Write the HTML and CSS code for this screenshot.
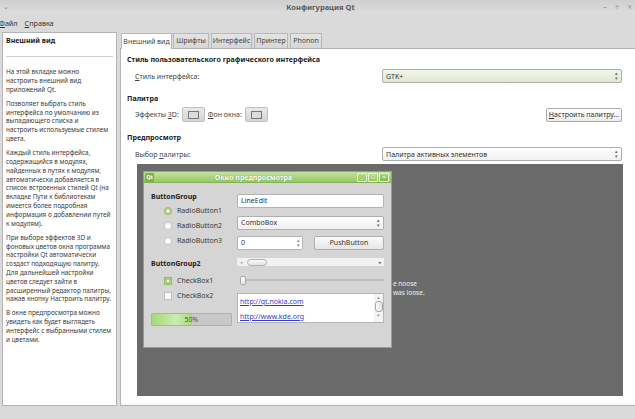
FILE: index.html
```html
<!DOCTYPE html>
<html lang="ru">
<head>
<meta charset="utf-8">
<title>Конфигурация Qt</title>
<link rel="stylesheet" href="styles.css">
</head>
<body>
<div class="titlebar">
  <span class="tb-menu">&#8964;</span>
  <span class="tb-title">Конфигурация Qt</span>
  <span class="tb-ctrls"><span>&#8211;</span><span>+</span><span>&#215;</span></span>
</div>
<div class="menubar">
  <span class="menu"><u>Ф</u>айл</span>
  <span class="menu"><u>С</u>правка</span>
</div>
<div class="main">
  <div class="help">
    <div class="help-title">Внешний вид</div>
    <div class="sep"></div>
    <p>На этой вкладке можно<br>настроить внешний вид<br>приложений Qt.</p>
    <p>Позволяет выбрать стиль<br>интерфейса по умолчанию из<br>выпадающего списка и<br>настроить используемые стилем<br>цвета.</p>
    <p>Каждый стиль интерфейса,<br>содержащийся в модулях,<br>найденных в путях к модулям,<br>автоматически добавляется в<br>список встроенных стилей Qt (на<br>вкладке Пути к библиотекам<br>имеется более подробная<br>информация о добавлении путей<br>к модулям).</p>
    <p>При выборе эффектов 3D и<br>фоновых цветов окна программа<br>настройки Qt автоматически<br>создаст подходящую палитру.<br>Для дальнейшей настройки<br>цветов следует зайти в<br>расширенный редактор палитры,<br>нажав кнопку Настроить палитру.</p>
    <p>В окне предпросмотра можно<br>увидеть как будет выглядеть<br>интерфейс с выбранными стилем<br>и цветами.</p>
  </div>
  <div class="tabwidget">
    <div class="tabbar">
      <span class="tab active w1">Внешний вид</span>
      <span class="tab w2">Шрифты</span>
      <span class="tab w3">Интерфейс</span>
      <span class="tab w4">Принтер</span>
      <span class="tab w5">Phonon</span>
    </div>
    <div class="panel">
      <div class="h">Стиль пользовательского графического интерфейса</div>
      <div class="row r1">
        <span class="lbl"><u>С</u>тиль интерфейса:</span>
        <span class="combo green">GTK+<span class="arr">&#9652;<br>&#9662;</span></span>
      </div>
      <div class="h h2">Палитра</div>
      <div class="row r2">
        <span>Эффекты <u>3</u>D:</span>
        <span class="colbtn"><span class="swatch"></span></span>
        <span><u>Ф</u>он окна:</span>
        <span class="colbtn"><span class="swatch"></span></span>
        <span class="spacer"></span>
        <span class="btn"><u>Н</u>астроить палитру...</span>
      </div>
      <div class="h h2">Предпросмотр</div>
      <div class="row r1">
        <span class="lbl">Выбор <u>п</u>алитры:</span>
        <span class="combo">Палитра активных элементов<span class="arr">&#9652;<br>&#9662;</span></span>
      </div>
      <div class="canvas">
        <div class="bgtext">e noose<br>was loose.</div>
        <div class="pwin">
          <div class="ptitle">
            <span class="qt">Qt</span>
            <span class="ptitle-text">Окно предпросмотра</span>
            <span class="pbtns"><span class="pb">_</span><span class="pb">&#9633;</span><span class="pb close">&#215;</span></span>
          </div>
          <div class="pbody">
            <div class="lcol">
              <div class="gh">ButtonGroup</div>
              <div class="opt"><span class="radio on"></span>RadioButton1</div>
              <div class="opt"><span class="radio"></span>RadioButton2</div>
              <div class="opt"><span class="radio"></span>RadioButton3</div>
              <div class="gh gh2">ButtonGroup2</div>
              <div class="opt o2"><span class="check on"></span>CheckBox1</div>
              <div class="opt"><span class="check"></span>CheckBox2</div>
              <div class="progress"><span class="fill" style="width:50%"></span><span class="ptext">50%</span></div>
            </div>
            <div class="rcol">
              <div class="ledit">LineEdit</div>
              <div class="pcombo">ComboBox<span class="arr">&#9652;<br>&#9662;</span></div>
              <div class="spinrow">
                <span class="spin">0<span class="sarr">&#9652;<br>&#9662;</span></span>
                <span class="pbutton">PushButton</span>
              </div>
              <div class="hscroll"><span class="sa">&#9666;</span><span class="handle"></span><span class="sa right">&#9656;</span></div>
              <div class="slider"><span class="shandle"></span></div>
              <div class="list">
                <div class="links"><a>http://qt.nokia.com</a><a>http://www.kde.org</a></div>
                <div class="vscroll"><span class="va">&#9652;</span><span class="vhandle"></span><span class="va">&#9662;</span></div>
              </div>
            </div>
          </div>
        </div>
      </div>
    </div>
  </div>
</div>
</body>
</html>
```
FILE: styles.css
```css
* { box-sizing: border-box; margin: 0; padding: 0; }
html, body { width: 635px; height: 419px; overflow: hidden; }
body {
  background: #dadada;
  font-family: "Noto Sans", "Open Sans", sans-serif;
  font-size: 7px;
  color: #333;
}
u { text-decoration: underline; }

.titlebar {
  height: 13px;
  display: flex;
  align-items: center;
  background: linear-gradient(#cfcfcf, #dcdcdc);
  color: #666;
}
.tb-menu { width: 40px; padding-left: 3px; font-size: 7px; color: #888; }
.tb-title { flex: 1; text-align: center; font-weight: bold; font-size: 7.5px; color: #5a5a5a; padding-left: 6px; }
.tb-ctrls { width: 40px; display: flex; justify-content: flex-end; gap: 8px; padding-right: 3px; color: #999; font-size: 8px; }

.menubar {
  height: 19px;
  display: flex;
  align-items: center;
  gap: 7px;
  margin-left: -1px;
  font-size: 7.2px;
  color: #333;
}

.main {
  display: flex;
  padding-left: 2px;
  height: 374px;
}
.help {
  width: 115px;
  height: 374px;
  background: #fff;
  border: 1px solid #b4b4b4;
  padding: 3px 3px 0 3px;
  line-height: 8.8px;
}
.help-title { font-weight: bold; color: #222; height: 10px; line-height: 10px; }
.sep { height: 1px; background: #d0d0d0; margin: 10px 0 11px 0; }
.help p { margin-bottom: 5.4px; color: #3a3a3a; white-space: nowrap; font-size: 6.4px; }

.tabwidget { flex: 1; margin-left: 3px; display: flex; flex-direction: column; }
.tabbar { height: 16px; display: flex; align-items: flex-end; padding-left: 1px; }
.tab {
  height: 15px;
  line-height: 14px;
  text-align: center;
  border: 1px solid #b8b8b8;
  border-bottom: none;
  background: linear-gradient(#e4e4e4, #d6d6d6);
  margin-right: 2px;
  color: #444;
}
.tab.active { height: 16px; background: #fff; position: relative; z-index: 2; margin-bottom: -1px; line-height: 15px; }
.w1 { width: 51px; margin-right: 1px; }
.w2 { width: 36px; }
.w3 { width: 41px; }
.w4 { width: 34px; }
.w5 { width: 32px; }

.panel {
  height: 358px;
  background: linear-gradient(#fff 0, #fff 353px, #ececec 358px);
  border: 1px solid #b4b4b4;
  border-right: none;
  padding: 5px 0 0 6px;
}
.h { height: 11px; line-height: 11px; font-weight: bold; color: #222; font-size: 7.1px; }
.h2 { margin-top: 10px; }
.row { display: flex; align-items: center; padding-left: 8px; color: #444; }
.r1 { height: 14px; margin-top: 3px; }
.h + .r1 { margin-top: 4px; }
.lbl { width: 247px; }
.combo {
  width: 240px;
  height: 14px;
  border: 1px solid #adadad;
  border-radius: 2px;
  background: linear-gradient(#ffffff, #f1f1f1);
  padding-left: 3px;
  display: flex;
  align-items: center;
  position: relative;
  color: #333;
}
.combo.green { background: linear-gradient(#f3f7ea, #dfe8cf); }
.arr {
  position: absolute;
  right: 3px;
  top: 1px;
  font-size: 5px;
  line-height: 5px;
  color: #666;
}
.r2 { height: 15px; margin-top: 3px; }
.colbtn {
  width: 23px;
  height: 15px;
  border: 1px solid #c0c0c0;
  border-radius: 2px;
  background: linear-gradient(#eaeaea, #d4d4d4);
  display: flex;
  align-items: center;
  justify-content: center;
  margin: 0 3px 0 3px;
}
.swatch { width: 11px; height: 8px; border: 1px solid #777; background: #dcdcdc; }
.spacer { flex: 1; }
.btn {
  width: 76px;
  height: 14px;
  border: 1px solid #adadad;
  border-radius: 2px;
  background: linear-gradient(#ffffff, #ececec);
  display: flex;
  align-items: center;
  justify-content: center;
  margin-right: 13px;
  color: #333;
}

.canvas {
  position: relative;
  margin: 3px 0 0 10px;
  width: 486px;
  height: 232px;
  background: #6b6b6b;
  overflow: hidden;
}
.bgtext {
  position: absolute;
  left: 256px;
  top: 116px;
  color: #f0f0f0;
  font-size: 6.5px;
  line-height: 8.5px;
}
.pwin {
  position: absolute;
  left: 6px;
  top: 7px;
  width: 249px;
  height: 177px;
  background: #d5d5d5;
  border: 1px solid #9a9a9a;
  border-top: none;
}
.ptitle {
  height: 12px;
  margin: 0 -1px;
  background: linear-gradient(#c3e39c, #98c865);
  border: 1px solid #84b356;
  border-radius: 2px 2px 0 0;
  display: flex;
  align-items: center;
  position: relative;
}
.qt {
  width: 9px;
  height: 9px;
  margin-left: 1px;
  background: #7cb342;
  color: #fff;
  font-weight: bold;
  font-size: 5.5px;
  line-height: 9px;
  text-align: center;
  border-radius: 1px;
}
.ptitle-text {
  flex: 1;
  text-align: center;
  color: #fff;
  font-size: 7px;
  font-weight: bold;
  text-shadow: 0 0 1px #5a8a2c;
  padding-right: 4px;
}
.pbtns { display: flex; gap: 1px; padding-right: 2px; }
.pb {
  width: 10px;
  height: 9px;
  border: 1px solid #e6f3d6;
  border-radius: 1px;
  background: linear-gradient(#b7dc8b, #94c562);
  color: #fff;
  font-size: 6px;
  line-height: 7px;
  text-align: center;
}
.pb.close { background: linear-gradient(#a9d67a, #86bc4f); }

.pbody { display: flex; gap: 5px; padding: 8px 0 0 7px; color: #333; font-size: 7px; }
.lcol { width: 81px; display: flex; flex-direction: column; }
.gh { height: 12px; line-height: 12px; font-weight: bold; color: #222; }
.gh2 { margin-top: 10px; }
.opt { height: 15px; display: flex; align-items: center; padding-left: 13px; gap: 5px; color: #3a3a3a; }
.o2 { margin-top: 3px; }
.radio {
  width: 8px;
  height: 8px;
  border-radius: 50%;
  background: #fff;
  border: 1px solid #c4c4c4;
}
.radio.on { background: radial-gradient(circle, #f4fbe9 0 1.5px, #a9d27c 2px); border-color: #8fbf60; }
.check {
  width: 8px;
  height: 8px;
  background: #fff;
  border: 1px solid #bdbdbd;
}
.check.on { background: radial-gradient(circle, #fff 0 1px, #a7d07a 1.5px); border-color: #8fbf60; }
.progress {
  margin-top: 10px;
  height: 13px;
  width: 81px;
  border: 1px solid #b0b0b0;
  border-radius: 1px;
  background: #c8c8c8;
  position: relative;
}
.fill { position: absolute; left: 0; top: 0; bottom: 0; background: linear-gradient(90deg, #a6d879, #cdeab0 60%, #a9d77c); }
.ptext { position: absolute; inset: 0; text-align: center; line-height: 11px; color: #555; }

.rcol { width: 147px; display: flex; flex-direction: column; }
.ledit {
  margin-top: 3px;
  height: 14px;
  background: #fff;
  border: 1px solid #b4b4b4;
  border-radius: 2px;
  padding-left: 3px;
  line-height: 12px;
}
.pcombo {
  margin-top: 8px;
  height: 14px;
  background: linear-gradient(#ffffff, #efefef);
  border: 1px solid #b0b0b0;
  border-radius: 2px;
  padding-left: 3px;
  line-height: 12px;
  position: relative;
}
.spinrow { margin-top: 6px; height: 14px; display: flex; gap: 11px; }
.spin {
  width: 66px;
  background: #fff;
  border: 1px solid #b4b4b4;
  border-radius: 2px;
  padding-left: 3px;
  line-height: 12px;
  position: relative;
}
.sarr {
  position: absolute;
  right: 2px;
  top: 1px;
  font-size: 5px;
  line-height: 5px;
  color: #888;
}
.pbutton {
  flex: 1;
  background: linear-gradient(#fbfbfb, #e6e6e6);
  border: 1px solid #b0b0b0;
  border-radius: 2px;
  text-align: center;
  line-height: 12px;
}
.hscroll {
  margin-top: 8px;
  height: 8px;
  background: #f2f2f2;
  display: flex;
  align-items: center;
  position: relative;
}
.sa { font-size: 5px; color: #aaa; width: 8px; text-align: center; line-height: 8px; }
.sa.right { margin-left: auto; color: #666; }
.handle {
  width: 20px;
  height: 7px;
  border: 1px solid #b0b0b0;
  border-radius: 4px;
  background: linear-gradient(#fbfbfb, #e2e2e2);
  margin-left: 2px;
}
.slider {
  margin-top: 9px;
  height: 10px;
  position: relative;
  display: flex;
  align-items: center;
}
.slider::before {
  content: "";
  position: absolute;
  left: 4px;
  right: 0;
  top: 4px;
  height: 2px;
  background: #bdbdbd;
  border-radius: 1px;
}
.shandle {
  position: relative;
  margin-left: 3px;
  width: 6px;
  height: 9px;
  background: linear-gradient(#fff, #e6e6e6);
  border: 1px solid #a8a8a8;
  border-radius: 2px;
}
.list {
  margin-top: 8px;
  height: 30px;
  background: #fff;
  border: 1px solid #b4b4b4;
  display: flex;
}
.links { flex: 1; display: flex; flex-direction: column; padding: 2px 0 0 2px; gap: 3px; }
.links a { color: #3b3bc8; text-decoration: underline; font-size: 7px; line-height: 12px; }
.vscroll { width: 9px; display: flex; flex-direction: column; align-items: center; background: #f4f4f4; }
.va { font-size: 5px; line-height: 7px; color: #999; }
.vhandle {
  width: 8px;
  height: 11px;
  border: 1px solid #aaa;
  border-radius: 3px;
  background: linear-gradient(90deg, #fafafa, #e2e2e2);
}
```
